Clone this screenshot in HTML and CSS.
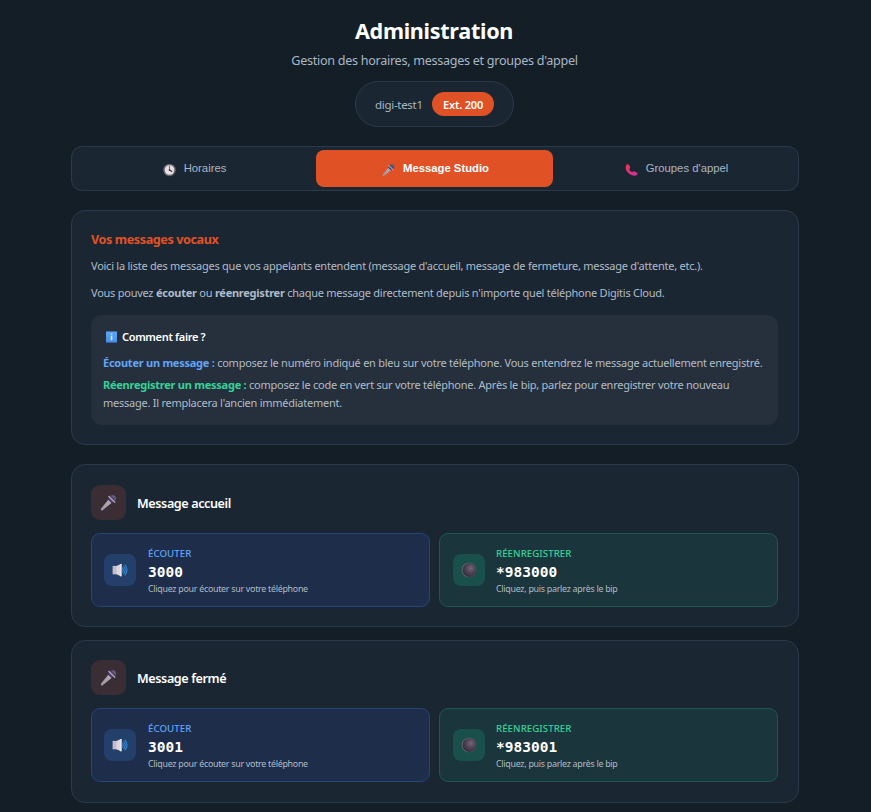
FILE: index.html
```html
<!DOCTYPE html>
<html lang="fr">
<head>
    <meta charset="UTF-8">
    <meta name="viewport" content="width=device-width, initial-scale=1.0">
    <title>Administration</title>
    <link rel="stylesheet" href="styles.css">
</head>
<body>

    <!-- shared icons -->
    <svg class="sprite" width="0" height="0" aria-hidden="true">
        <defs>
            <linearGradient id="grip" x1="0" y1="1" x2="1" y2="0">
                <stop offset="0" stop-color="#9a929f"/>
                <stop offset="1" stop-color="#b8b0ba"/>
            </linearGradient>
            <radialGradient id="ball" cx="0.6" cy="0.38" r="0.65">
                <stop offset="0" stop-color="#70667a"/>
                <stop offset="0.55" stop-color="#4b4152"/>
                <stop offset="1" stop-color="#352c3b"/>
            </radialGradient>
            <linearGradient id="phone" x1="0" y1="0" x2="1" y2="1">
                <stop offset="0" stop-color="#f03554"/>
                <stop offset="1" stop-color="#cf2fa0"/>
            </linearGradient>
            <linearGradient id="info" x1="0" y1="0" x2="0" y2="1">
                <stop offset="0" stop-color="#5ba8f5"/>
                <stop offset="1" stop-color="#4a8fe8"/>
            </linearGradient>
        </defs>
        <symbol id="icon-mic" viewBox="0 0 16 16">
            <path d="M1 13.6 8.2 5l3.2 3.1L2.6 15.2q-1 .6-1.6 0-.6-.8 0-1.600z" fill="url(#grip)"/>
            <circle cx="11.900" cy="4.200" r="3.300" fill="#50466a"/>
            <path d="M10.800 1.300a3.300 3.300 0 0 1 4.100 4.200z" fill="#675d80"/>
            <path d="M8.300 2.300l5.600 5.500" stroke="#aaa3b5" stroke-width="1.300" stroke-linecap="round"/>
            <path d="M7.600 4.600l4 4" stroke="#46307a" stroke-width="1.100"/>
        </symbol>
        <symbol id="icon-speaker" viewBox="0 0 16 16">
            <path d="M.6 3.900h4.400v8.400H.6z" fill="#c5bccb"/>
            <path d="M4.500 3.900 9.300 1.800v12.600l-4.800-2.100z" fill="#ded6df"/>
            <path d="M8.200 2h1.400v12.200H8.200z" fill="#f0e9ee"/>
            <path d="M10.500 6.200q1.600 1.900 0 3.800M11.700 4.600q3 3.500 0 7M13 3.200q4 4.900 0 9.800" fill="none" stroke="#3489d4" stroke-width="1.100" stroke-linecap="round"/>
        </symbol>
        <symbol id="icon-record" viewBox="0 0 16 16">
            <circle cx="8" cy="8" r="7.300" fill="#75707c"/>
            <circle cx="8.400" cy="8" r="7" fill="url(#ball)"/>
        </symbol>
    </svg>

    <div class="container">

        <header class="header">
            <h1>Administration</h1>
            <p class="subtitle">Gestion des horaires, messages et groupes d'appel</p>
            <div class="user-info">
                <span class="user-name">digi-test1</span>
                <span class="badge">Ext. 200</span>
            </div>
        </header>

        <nav class="tabs">
            <button class="tab">
                <svg class="tab-icon" viewBox="0 0 16 16">
                    <circle cx="8" cy="8" r="7.700" fill="#6d6570"/>
                    <circle cx="8" cy="8" r="5.900" fill="#e6e0e5"/>
                    <path d="M8 3v5" stroke="#d83a5c" stroke-width="1.300"/>
                    <path d="M8 8l3.300 2" stroke="#433b4d" stroke-width="1.500"/>
                    <circle cx="8" cy="8" r="1.100" fill="#433b4d"/>
                </svg>
                <span>Horaires</span>
            </button>
            <button class="tab active">
                <svg class="tab-icon"><use href="#icon-mic"/></svg>
                <span>Message Studio</span>
            </button>
            <button class="tab">
                <svg class="tab-icon" viewBox="0 0 16 16">
                    <path d="M2.200 1.300Q3.700.2 5 1.800l1.300 2.600q.5 1.300-1 2.300-.4 1.200 1.100 2.600 1.700 1.600 3 1.200 1.100-1.400 2.400-.8l2.900 1.600q1.500 1 .2 2.500-2.800 2.800-7.600 0Q.9 10.600.8 5q0-2.500 1.400-3.700z" fill="url(#phone)"/>
                </svg>
                <span>Groupes d'appel</span>
            </button>
        </nav>

        <section class="card intro">
            <h2>Vos messages vocaux</h2>
            <p>Voici la liste des messages que vos appelants entendent (message d'accueil, message de fermeture, message d'attente, etc.).</p>
            <p>Vous pouvez <strong>écouter</strong> ou <strong>réenregistrer</strong> chaque message directement depuis n'importe quel téléphone Digitis Cloud.</p>

            <div class="help">
                <h3>
                    <svg class="help-icon" viewBox="0 0 12 12">
                        <path d="M0 0h12v12H0z" fill="url(#info)"/>
                        <path d="M0 11.300h12v.7H0z" fill="#3668c0"/>
                        <path d="M5.200 2.100h1.700v1.500H5.200zM5.200 4.600h1.700v5H5.200z" fill="#dcecff"/>
                    </svg>
                    <span>Comment faire ?</span>
                </h3>
                <p><strong class="blue">Écouter un message :</strong> composez le numéro indiqué en bleu sur votre téléphone. Vous entendrez le message actuellement enregistré.</p>
                <p><strong class="green">Réenregistrer un message :</strong> composez le code en vert sur votre téléphone. Après le bip, parlez pour enregistrer votre nouveau<br>message. Il remplacera l'ancien immédiatement.</p>
            </div>
        </section>

        <section class="card message">
            <div class="message-header">
                <div class="message-icon"><svg><use href="#icon-mic"/></svg></div>
                <h3>Message accueil</h3>
            </div>
            <div class="actions">
                <a class="action listen">
                    <div class="action-icon"><svg><use href="#icon-speaker"/></svg></div>
                    <div>
                        <div class="action-label">ÉCOUTER</div>
                        <div class="action-code">3000</div>
                        <div class="action-hint">Cliquez pour écouter sur votre téléphone</div>
                    </div>
                </a>
                <a class="action record">
                    <div class="action-icon"><svg><use href="#icon-record"/></svg></div>
                    <div>
                        <div class="action-label">RÉENREGISTRER</div>
                        <div class="action-code">*983000</div>
                        <div class="action-hint">Cliquez, puis parlez après le bip</div>
                    </div>
                </a>
            </div>
        </section>

        <section class="card message last">
            <div class="message-header">
                <div class="message-icon"><svg><use href="#icon-mic"/></svg></div>
                <h3>Message fermé</h3>
            </div>
            <div class="actions">
                <a class="action listen">
                    <div class="action-icon"><svg><use href="#icon-speaker"/></svg></div>
                    <div>
                        <div class="action-label">ÉCOUTER</div>
                        <div class="action-code">3001</div>
                        <div class="action-hint">Cliquez pour écouter sur votre téléphone</div>
                    </div>
                </a>
                <a class="action record">
                    <div class="action-icon"><svg><use href="#icon-record"/></svg></div>
                    <div>
                        <div class="action-label">RÉENREGISTRER</div>
                        <div class="action-code">*983001</div>
                        <div class="action-hint">Cliquez, puis parlez après le bip</div>
                    </div>
                </a>
            </div>
        </section>

    </div>

</body>
</html>
```
FILE: styles.css
```css
* {
    box-sizing: border-box;
    margin: 0;
    padding: 0;
}
body {
    background: #141e27;
    color: #fff;
    font-family: "Segoe UI", "Noto Sans", sans-serif;
    font-size: 11px;
    height: 812px;
    overflow: hidden;
}
.sprite {
    display: block;
}
svg {
    flex-shrink: 0;
}
.container {
    width: 728px;
    margin-left: 71px;
    padding-top: 15px;
}

/* header */
.header {
    display: flex;
    flex-direction: column;
    align-items: center;
    margin-bottom: 19px;
}
h1 {
    font-size: 21.6px;
    line-height: 32px;
    letter-spacing: -0.3px;
    margin-right: 2px;
}
.subtitle {
    font-size: 12.6px;
    line-height: 18px;
    letter-spacing: -0.29px;
    margin-top: 5px;
    margin-right: 1px;
    color: #a9b7c4;
}
.user-info {
    display: flex;
    align-items: center;
    gap: 10px;
    height: 46px;
    width: 159px;
    margin-top: 11px;
    margin-right: 1px;
    padding: 0 19px;
    background: #1b2633;
    border: 1px solid #2b3a4b;
    border-radius: 23px;
}
.user-name {
    width: 47px;
    font-size: 11.5px;
    letter-spacing: -0.3px;
    color: #a9b7c4;
    white-space: nowrap;
}
.badge {
    width: 62px;
    height: 24px;
    line-height: 25px;
    text-align: center;
    border-radius: 12px;
    background: #e05226;
    font-size: 11px;
    font-weight: 600;
    letter-spacing: -0.2px;
    white-space: nowrap;
}

/* tabs */
.tabs {
    display: grid;
    grid-template-columns: repeat(3, 237px);
    gap: 4px;
    height: 45px;
    padding: 3px;
    background: #1b2633;
    border: 1px solid #2b3a4b;
    border-radius: 11px;
    margin-bottom: 19px;
}
.tab {
    display: flex;
    align-items: center;
    justify-content: center;
    gap: 8px;
    padding-left: 2px;
    border: none;
    border-radius: 8px;
    background: none;
    color: #a9b7c4;
    font-family: "Liberation Sans", Arial, sans-serif;
    font-size: 11.3px;
    font-weight: 500;
    cursor: pointer;
}
.tab.active {
    background: #e05226;
    color: #fff;
    font-weight: 600;
}
.tab span {
    padding-bottom: 1px;
}
.tab-icon {
    width: 13px;
    height: 14px;
    margin-top: 2px;
}

/* cards */
.card {
    background: #1b2633;
    border: 1px solid #2b3a4b;
    border-radius: 14px;
    padding: 20px 20px 0 19px;
}
.intro {
    height: 235px;
    margin-bottom: 19px;
    color: #b0bcc8;
}
.intro h2 {
    font-size: 12.6px;
    line-height: 18px;
    letter-spacing: -0.4px;
    color: #e05226;
}
.intro > p {
    line-height: 18px;
    letter-spacing: -0.25px;
    white-space: nowrap;
    margin-top: 9px;
}
.intro > h2 + p {
    margin-top: 8px;
}
.help {
    height: 110px;
    margin-top: 13px;
    padding: 13px 13px 0 12px;
    background: #25303c;
    border-radius: 11px;
}
.help h3 {
    display: flex;
    align-items: center;
    gap: 5px;
    padding-left: 3px;
    font-size: 11px;
    line-height: 18px;
    letter-spacing: -0.33px;
    color: #fff;
    font-weight: 600;
}
.help-icon {
    width: 11px;
    height: 12px;
}
.help p {
    line-height: 18px;
    letter-spacing: -0.25px;
    white-space: nowrap;
    margin-top: 4px;
}
.help h3 + p {
    margin-top: 8px;
}
.blue {
    color: #60a5fa;
}
.green {
    color: #34d399;
}

/* messages */
.message {
    height: 163px;
    margin-bottom: 13px;
}
.message.last {
    padding-top: 19px;
}
.message-header {
    display: flex;
    align-items: center;
    gap: 11px;
    margin-bottom: 13px;
}
.message-header h3 {
    padding-top: 2px;
    font-size: 12.6px;
    font-weight: 600;
    letter-spacing: -0.4px;
}
.message-icon {
    display: flex;
    align-items: center;
    justify-content: center;
    width: 35px;
    height: 35px;
    border-radius: 9px;
    background: #3a2d33;
}
.message-icon svg {
    width: 17px;
    height: 17px;
}
.actions {
    display: grid;
    grid-template-columns: 1fr 1fr;
    gap: 9px;
}
.action {
    display: flex;
    align-items: center;
    gap: 12px;
    height: 74px;
    padding: 0 12px;
    border: 1px solid;
    border-radius: 9px;
    cursor: pointer;
}
.action.listen {
    background: #1e2d49;
    border-color: #25447a;
}
.action.record {
    background: #1b353c;
    border-color: #1b594f;
    gap: 11px;
    padding-left: 13px;
}
.action-icon {
    display: flex;
    align-items: center;
    justify-content: center;
    width: 32px;
    height: 32px;
    border-radius: 8px;
}
.listen .action-icon {
    background: #23406a;
}
.record .action-icon {
    background: #1a504b;
}
.action-icon svg {
    width: 16px;
    height: 16px;
}
.action-label {
    font-size: 9.7px;
    line-height: 16px;
    font-weight: 500;
    letter-spacing: 0.05px;
}
.listen .action-label {
    color: #60a5fa;
}
.record .action-label {
    color: #34d399;
}
.action-code {
    font-family: Consolas, "DejaVu Sans Mono", monospace;
    font-size: 14.5px;
    font-weight: 700;
    line-height: 21px;
}
.action-hint {
    font-size: 8.9px;
    line-height: 12px;
    letter-spacing: -0.28px;
    color: #b0bcc8;
}
```
